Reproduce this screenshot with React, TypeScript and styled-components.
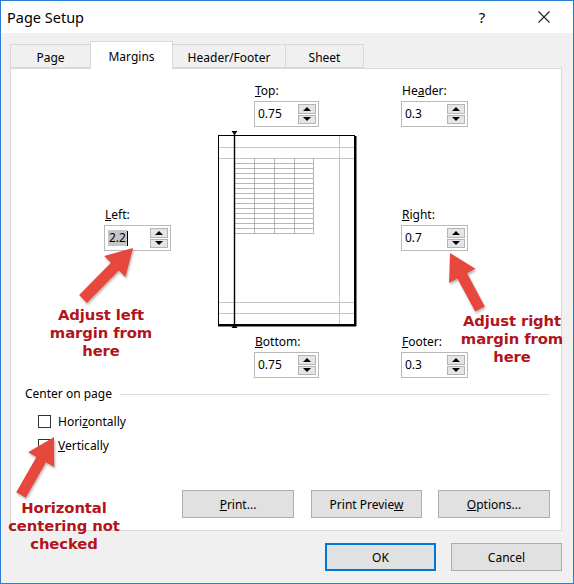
import React from "react";
import styled, { createGlobalStyle } from "styled-components";

const GlobalStyle = createGlobalStyle`
  html, body {
    margin: 0;
    padding: 0;
    background: #ffffff;
  }
  * {
    box-sizing: border-box;
  }
`;

const UI_FONT = `"Noto Sans", "Open Sans", sans-serif`;

const Window = styled.div`
  position: relative;
  width: 574px;
  height: 584px;
  border: 1px solid #2b7dd2;
  display: flex;
  flex-direction: column;
  font-family: ${UI_FONT};
  font-size: 12px;
  color: #000;
  overflow: hidden;
`;

const TitleBar = styled.div`
  height: 32px;
  background: #fff;
  display: flex;
  align-items: center;
  padding-left: 6px;
`;

const Title = styled.div`
  flex: 1;
  font-size: 14.5px;
  line-height: 20px;
`;

const HelpMark = styled.div`
  width: 20px;
  text-align: center;
  font-size: 15px;
  margin-right: 46px;
`;

const CloseIcon = styled.svg`
  width: 12px;
  height: 12px;
  margin-right: 23px;
`;

const Body = styled.div`
  flex: 1;
  background: #f0f0f0;
  padding: 8px 11px 11px 9px;
  display: flex;
  flex-direction: column;
`;

const TabRow = styled.div`
  display: flex;
  align-items: flex-start;
  height: 28px;
  margin-bottom: -1px;
  position: relative;
  z-index: 1;
`;

const Tab = styled.div<{ $active?: boolean; $w: number }>`
  width: ${(p) => p.$w}px;
  height: ${(p) => (p.$active ? 28 : 24)}px;
  margin-top: ${(p) => (p.$active ? 0 : 3)}px;
  background: ${(p) => (p.$active ? "#fff" : "#f0f0f0")};
  border: 1px solid #d9d9d9;
  border-bottom: ${(p) => (p.$active ? "none" : "1px solid #d9d9d9")};
  margin-left: -1px;
  display: flex;
  align-items: center;
  justify-content: center;
  padding-top: ${(p) => (p.$active ? 1 : 2)}px;
  &:first-child {
    margin-left: 0;
  }
`;

const Panel = styled.div`
  height: 463px;
  background: #fff;
  border: 1px solid #d9d9d9;
  display: flex;
  flex-direction: column;
`;

const MarginGrid = styled.div`
  margin-top: 14px;
  margin-left: 93px;
  display: grid;
  grid-template-columns: 113px 184px 67px;
  grid-template-rows: 44px 198px 44px;
  row-gap: 3px;
  & > :nth-child(n + 6) {
    margin-top: 3px;
  }
`;

const Field = styled.div<{ $col: number; $indent?: number; $center?: boolean }>`
  grid-column: ${(p) => p.$col};
  margin-left: ${(p) => p.$indent ?? 0}px;
  align-self: ${(p) => (p.$center ? "center" : "start")};
  display: flex;
  flex-direction: column;
  gap: 3px;
`;

const Label = styled.div`
  line-height: 15px;
  padding-left: 1px;
`;

const SpinBox = styled.div<{ $w: number }>`
  width: ${(p) => p.$w}px;
  height: 26px;
  border: 1px solid #b9b9b9;
  background: #fff;
  display: flex;
  align-items: center;
  padding-left: 3px;
`;

const Value = styled.div`
  flex: 1;
  line-height: 16px;
  display: flex;
  align-items: center;
`;

const Selected = styled.span`
  background: #c6c6c6;
  padding: 0 1px;
`;

const Caret = styled.span`
  width: 1px;
  height: 15px;
  background: #000;
`;

const SpinButtons = styled.div`
  width: 18px;
  height: 20px;
  margin-right: 2px;
  display: flex;
  flex-direction: column;
  gap: 1px;
`;

const SpinButton = styled.div<{ $up?: boolean }>`
  flex: 1;
  background: #e5e5e5;
  border: 1px solid #b4b4b4;
  display: flex;
  align-items: center;
  justify-content: center;
  &::after {
    content: "";
    border-left: 4px solid transparent;
    border-right: 4px solid transparent;
    ${(p) =>
      p.$up ? "border-bottom: 4px solid #000;" : "border-top: 4px solid #000;"}
  }
`;

const Preview = styled.svg`
  grid-column: 2;
  grid-row: 2;
  width: 140px;
  height: 198px;
`;

const Section = styled.div`
  margin-top: 11px;
  padding: 0 12px 0 14px;
`;

const GroupTitle = styled.div`
  display: flex;
  align-items: center;
  gap: 8px;
  line-height: 16px;
  &::after {
    content: "";
    flex: 1;
    height: 1px;
    background: #dcdcdc;
  }
`;

const CheckList = styled.div`
  margin-top: 7px;
  display: flex;
  flex-direction: column;
  padding-left: 13px;
`;

const CheckRow = styled.div`
  height: 24px;
  display: flex;
  align-items: center;
  gap: 7px;
`;

const CheckBox = styled.span`
  width: 13px;
  height: 13px;
  border: 1px solid #333;
  background: #fff;
`;

const ButtonRow = styled.div`
  margin-top: auto;
  display: flex;
  justify-content: flex-end;
  gap: 16px;
  padding: 0 11px 12px 0;
  & > :first-child {
    margin-right: 1px;
  }
`;

const Button = styled.div<{ $default?: boolean; $w?: number }>`
  width: ${(p) => p.$w ?? 112}px;
  height: 28px;
  background: #e1e1e1;
  border: 1px solid ${(p) => (p.$default ? "#0078d7" : "#adadad")};
  box-shadow: ${(p) => (p.$default ? "inset 0 0 0 1px #0078d7" : "none")};
  display: flex;
  align-items: center;
  justify-content: center;
`;

const Footer = styled.div`
  margin-top: 12px;
  display: flex;
  justify-content: flex-end;
  gap: 15px;
`;

const Overlay = styled.svg`
  position: absolute;
  left: 0;
  top: 0;
  width: 574px;
  height: 584px;
  pointer-events: none;
  filter: drop-shadow(1px 2px 1px rgba(0, 0, 0, 0.28));
`;

const Note = styled.div<{ $x: number; $y: number; $w: number }>`
  position: absolute;
  left: ${(p) => p.$x}px;
  top: ${(p) => p.$y}px;
  width: ${(p) => p.$w}px;
  text-align: center;
  font-family: "DejaVu Sans", Verdana, sans-serif;
  font-weight: bold;
  font-size: 14.8px;
  line-height: 18px;
  letter-spacing: -0.1px;
  color: #b3141c;
`;

function arrow(tx: number, ty: number, hx: number, hy: number) {
  const dx = hx - tx;
  const dy = hy - ty;
  const len = Math.hypot(dx, dy);
  const ux = dx / len;
  const uy = dy / len;
  const nx = -uy;
  const ny = ux;
  const shaft = 5.5;
  const head = 15;
  const headLen = 26;
  const bx = hx - ux * headLen;
  const by = hy - uy * headLen;
  const pts = [
    [tx + nx * shaft, ty + ny * shaft],
    [bx + nx * shaft, by + ny * shaft],
    [bx + nx * head, by + ny * head],
    [hx, hy],
    [bx - nx * head, by - ny * head],
    [bx - nx * shaft, by - ny * shaft],
    [tx - nx * shaft, ty - ny * shaft],
  ];
  return pts.map((p) => p.map((v) => v.toFixed(1)).join(",")).join(" ");
}

const Spinner: React.FC<{ value: React.ReactNode; w?: number }> = ({
  value,
  w = 67,
}) => (
  <SpinBox $w={w}>
    <Value>{value}</Value>
    <SpinButtons>
      <SpinButton $up />
      <SpinButton />
    </SpinButtons>
  </SpinBox>
);

const PagePreview = () => {
  const rows = Array.from({ length: 15 }, (_, i) => 33 + i * 5);
  const cols = [17, 37, 57, 77, 96];
  return (
    <Preview viewBox="0 0 140 198">
      <rect x="1.5" y="5.5" width="136" height="189" fill="#fff" stroke="#000" />
      <line x1="138.5" y1="6" x2="138.5" y2="196" stroke="#000" strokeWidth="2" />
      <line x1="1" y1="195.5" x2="139" y2="195.5" stroke="#000" strokeWidth="2" />
      {/* header / margin guides */}
      <g stroke="#c4c4c4" strokeWidth="1">
        <line x1="2" y1="17.5" x2="137" y2="17.5" />
        <line x1="2" y1="28.5" x2="137" y2="28.5" />
        <line x1="2" y1="172.5" x2="137" y2="172.5" />
        <line x1="2" y1="183.5" x2="137" y2="183.5" />
        <line x1="122.5" y1="6" x2="122.5" y2="194" />
      </g>
      <g stroke="#9a9a9a" strokeWidth="0.7">
        {rows.map((y) => (
          <line key={y} x1="17" y1={y + 0.5} x2="96" y2={y + 0.5} />
        ))}
        {cols.map((x) => (
          <line key={x} x1={x + 0.5} y1="28" x2={x + 0.5} y2="104" />
        ))}
      </g>
      <line x1="17.5" y1="2" x2="17.5" y2="197" stroke="#000" strokeWidth="1.4" />
      <polygon points="14.5,1 20.5,1 17.5,5" fill="#000" />
      <polygon points="14.5,198 20.5,198 17.5,194" fill="#000" />
    </Preview>
  );
};

export default function App() {
  return (
    <>
      <GlobalStyle />
      <Window>
        <TitleBar>
          <Title>Page Setup</Title>
          <HelpMark>?</HelpMark>
          <CloseIcon viewBox="0 0 12 12">
            <path d="M0.5 0.5 L11.5 11.5 M11.5 0.5 L0.5 11.5" stroke="#222" strokeWidth="1.1" />
          </CloseIcon>
        </TitleBar>
        <Body>
          <TabRow>
            <Tab $w={81}>Page</Tab>
            <Tab $w={83} $active>
              Margins
            </Tab>
            <Tab $w={114}>Header/Footer</Tab>
            <Tab $w={79}>Sheet</Tab>
          </TabRow>
          <Panel>
            <MarginGrid>
              <Field $col={2} $indent={37}>
                <Label>
                  <u>T</u>op:
                </Label>
                <Spinner value="0.75" w={65} />
              </Field>
              <Field $col={3}>
                <Label>
                  He<u>a</u>der:
                </Label>
                <Spinner value="0.3" />
              </Field>
              <Field $col={1} $center>
                <Label>
                  <u>L</u>eft:
                </Label>
                <Spinner
                  value={
                    <>
                      <Selected>2.2</Selected>
                      <Caret />
                    </>
                  }
                />
              </Field>
              <PagePreview />
              <Field $col={3} $center>
                <Label>
                  <u>R</u>ight:
                </Label>
                <Spinner value="0.7" />
              </Field>
              <Field $col={2} $indent={37}>
                <Label>
                  <u>B</u>ottom:
                </Label>
                <Spinner value="0.75" w={65} />
              </Field>
              <Field $col={3}>
                <Label>
                  <u>F</u>ooter:
                </Label>
                <Spinner value="0.3" />
              </Field>
            </MarginGrid>
            <Section>
              <GroupTitle>Center on page</GroupTitle>
              <CheckList>
                <CheckRow>
                  <CheckBox />
                  <span>
                    Hori<u>z</u>ontally
                  </span>
                </CheckRow>
                <CheckRow>
                  <CheckBox />
                  <span>
                    <u>V</u>ertically
                  </span>
                </CheckRow>
              </CheckList>
            </Section>
            <ButtonRow>
              <Button>
                <span>
                  <u>P</u>rint...
                </span>
              </Button>
              <Button $w={111}>
                <span>
                  Print Previe<u>w</u>
                </span>
              </Button>
              <Button>
                <span>
                  <u>O</u>ptions...
                </span>
              </Button>
            </ButtonRow>
          </Panel>
          <Footer>
            <Button $default $w={111}>
              OK
            </Button>
            <Button $w={111}>Cancel</Button>
          </Footer>
        </Body>
        <Overlay viewBox="0 0 574 584">
          <polygon points={arrow(82, 298, 132, 247)} fill="#e8473d" />
          <polygon points={arrow(479, 308, 449, 252)} fill="#e8473d" />
          <polygon points={arrow(20, 494, 53, 436)} fill="#e8473d" />
        </Overlay>
        <Note $x={30} $y={305} $w={140}>
          Adjust left
          <br />
          margin from
          <br />
          here
        </Note>
        <Note $x={446} $y={311} $w={130}>
          Adjust right
          <br />
          margin from
          <br />
          here
        </Note>
        <Note $x={-7} $y={498} $w={140}>
          Horizontal
          <br />
          centering not
          <br />
          checked
        </Note>
      </Window>
    </>
  );
}
